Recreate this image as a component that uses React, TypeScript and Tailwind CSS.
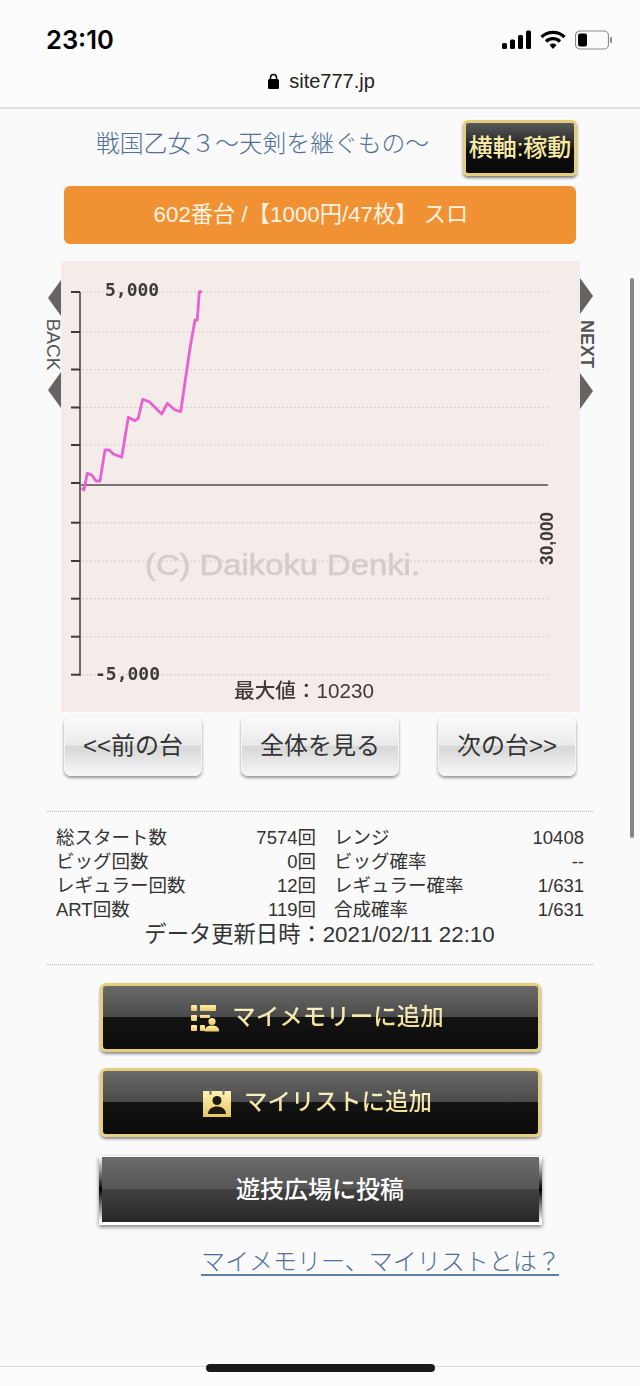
import React from "react";

const JP = '"Liberation Sans","Noto Sans CJK JP",sans-serif';

const line =
  "81.7,488 84,490 87.3,473.3 91.7,475 96,481 100,481 105,450 109.3,450 113.3,454 121.7,457.3 128.3,417.3 135,420.7 138.3,418.3 142.7,399.3 149.3,401.7 161.7,414 167.3,403.3 175,410 180.7,411.7 190,348.3 195,320 197.3,320 199.3,291.7 202,291.7";

const gridYs = [292, 332, 369.5, 407.5, 445, 522.7, 561, 598.7, 636.7, 674.7];
const tickYs = [292, 332, 369.5, 407.5, 445, 483, 522.7, 561, 598.7, 636.7, 674.7];

function Chart() {
  return (
    <svg viewBox="61 261 519 451" className="block w-[519px] h-[451px] blur-[0.5px]">
      {gridYs.map((y) => (
        <line key={y} x1={82} x2={548} y1={y} y2={y} stroke="#d6d0cc" strokeWidth={1.2} strokeDasharray="2 2" />
      ))}
      <line x1={80} x2={80} y1={292} y2={676} stroke="#6f6966" strokeWidth={2} />
      {tickYs.map((y) => (
        <line key={y} x1={71} x2={80} y1={y} y2={y} stroke="#3f3a38" strokeWidth={2} />
      ))}
      <line x1={80} x2={548} y1={485} y2={485} stroke="#7b7472" strokeWidth={2} />
      <polyline points={line} fill="none" stroke="#e860d2" strokeWidth={2.8} strokeLinejoin="round" />
      <text x={105} y={296} fontFamily='"DejaVu Sans Mono",monospace' fontSize={18} fontWeight={700} fill="#3d3a38">5,000</text>
      <text x={95} y={680} fontFamily='"DejaVu Sans Mono",monospace' fontSize={18} fontWeight={700} fill="#3d3a38">-5,000</text>
      <text x={145} y={575} fontFamily='"Liberation Sans",sans-serif' fontSize={30} fontWeight={400} fill="#d3cdca" stroke="#d3cdca" strokeWidth={0.6} textLength={275} lengthAdjust="spacingAndGlyphs">(C) Daikoku Denki.</text>
      <text x={234} y={698} fontFamily={JP} fontSize={20} fontWeight={500} fill="#3f3a38" textLength={140} lengthAdjust="spacingAndGlyphs">最大値：10230</text>
      <text transform="translate(553,565) rotate(-90)" fontFamily='"Liberation Sans",sans-serif' fontSize={19} fontWeight={700} fill="#3d3a38" textLength={53} lengthAdjust="spacingAndGlyphs">30,000</text>
    </svg>
  );
}

function Tri({ dir }: { dir: "l" | "r" }) {
  return (
    <svg width="14" height="36" viewBox="0 0 14 36" className="block">
      <polygon points={dir === "l" ? "14,0 1,18 14,36" : "0,0 13,18 0,36"} fill="#666463" />
    </svg>
  );
}

function SideNav({ label, dir }: { label: string; dir: "l" | "r" }) {
  return (
    <div className={`w-[14px] flex flex-col items-center ${dir === "l" ? "pt-[19px]" : "pt-[17px]"}`}>
      <Tri dir={dir} />
      <div className={`flex items-center justify-center ${dir === "l" ? "h-[56px]" : "h-[59px]"}`}>
        <span
          className={`rotate-90 leading-none text-[#555] whitespace-nowrap ${dir === "l" ? "text-[19px]" : "text-[18px] font-bold"}`}
          style={{ fontFamily: JP }}
        >
          {label}
        </span>
      </div>
      <Tri dir={dir} />
    </div>
  );
}

function GreyBtn({ label, w }: { label: string; w: string }) {
  return (
    <div
      className={`${w} h-[60px] rounded-[7px] flex items-center justify-center text-[24px] text-[#333] bg-[linear-gradient(#fbfbfb_0%,#e9e9e9_49%,#d6d6d6_50%,#f7f7f7_100%)] border border-[#f4f4f4] shadow-[0_2px_3px_rgba(0,0,0,0.4)]`}
    >
      {label}
    </div>
  );
}

function StatRow({ a, b, c, d }: { a: string; b: string; c: string; d: string }) {
  return (
    <div className="flex h-[24px] items-center text-[18.5px] text-[#333] leading-[24px]">
      <span className="w-[190px] whitespace-nowrap">{a}</span>
      <span className="w-[70px] text-right whitespace-nowrap">{b}</span>
      <span className="w-[18px]" />
      <span className="w-[180px] whitespace-nowrap">{c}</span>
      <span className="w-[70px] text-right whitespace-nowrap">{d}</span>
    </div>
  );
}

function MemoryIcon() {
  return (
    <svg width="28" height="28" viewBox="0 0 28 28">
      <defs>
        <linearGradient id="g1" x1="0" y1="0" x2="0" y2="1">
          <stop offset="0" stopColor="#fff0a8" />
          <stop offset="1" stopColor="#e8c968" />
        </linearGradient>
      </defs>
      <g fill="url(#g1)">
        <rect x="0" y="1" width="6" height="6" rx="1" />
        <rect x="0" y="11" width="6" height="6" rx="1" />
        <rect x="0" y="21" width="6" height="6" rx="1" />
        <rect x="9" y="1" width="16" height="6" rx="1" />
        <rect x="9" y="11" width="10" height="3" />
        <rect x="9" y="21" width="5" height="6" rx="1" />
        <circle cx="21" cy="17.5" r="3.6" />
        <path d="M13.5 27.5c.5-4.5 3.5-6 7.5-6s7 1.5 7.5 6z" />
      </g>
    </svg>
  );
}

function ListIcon() {
  return (
    <svg width="28" height="28" viewBox="0 0 28 28">
      <defs>
        <linearGradient id="g2" x1="0" y1="0" x2="0" y2="1">
          <stop offset="0" stopColor="#fff3b4" />
          <stop offset="1" stopColor="#e6c662" />
        </linearGradient>
      </defs>
      <rect x="0" y="2" width="28" height="26" fill="url(#g2)" />
      <rect x="6.5" y="0" width="2" height="6" rx="1" fill="#6a6a6a" />
      <rect x="19.5" y="0" width="2" height="6" rx="1" fill="#6a6a6a" />
      <circle cx="14" cy="11.5" r="4.5" fill="#1d1a12" />
      <path d="M5 25c.5-5.5 4.500-7.500 9-7.500s8.500 2 9 7.500z" fill="#1d1a12" />
    </svg>
  );
}

function GoldBtn({ icon, label, mt }: { icon: React.ReactNode; label: string; mt: string }) {
  return (
    <div
      className={`${mt} w-[441px] h-[69px] mx-auto pr-[5px] rounded-[6px] border-[3px] border-[#e6cf7c] flex items-center justify-center gap-[13px] bg-[linear-gradient(#6a6a6a_0%,#4b4b4b_49%,#141414_50%,#0b0b0b_100%)] shadow-[0_2px_3px_rgba(0,0,0,0.45)]`}
    >
      {icon}
      <span className="text-[23.5px] font-medium bg-[linear-gradient(#fff9cf,#ecd584)] bg-clip-text text-transparent">
        {label}
      </span>
    </div>
  );
}

export default function App() {
  return (
    <div className="relative w-[640px] h-[1386px] overflow-hidden bg-[#fafafa]" style={{ fontFamily: JP }}>
      {/* browser header */}
      <div className="h-[109px] bg-[#fcfcfc] border-b-2 border-[#e2e2e2]">
        <div className="flex items-center justify-between h-[78px] pl-[46px] pr-[27px] pt-[2px]">
          <span className="text-[25.5px] font-semibold text-black" style={{ fontFamily: "Inter,sans-serif" }}>23:10</span>
          <div className="flex items-center gap-[8px]">
            <svg width="30" height="20" viewBox="0 0 30 20">
              <rect x="0" y="13" width="5" height="6" rx="1.5" fill="#000" />
              <rect x="8" y="9.5" width="5" height="9.5" rx="1.5" fill="#000" />
              <rect x="16" y="5" width="5" height="14" rx="1.5" fill="#000" />
              <rect x="24" y="0.5" width="5" height="18.5" rx="1.5" fill="#000" />
            </svg>
            <svg width="26" height="20" viewBox="0 0 26 20">
              <path d="M1.5 7a16.5 16.5 0 0 1 23 0" fill="none" stroke="#000" strokeWidth="3.2" />
              <path d="M6 11.5a10 10 0 0 1 14 0" fill="none" stroke="#000" strokeWidth="3.2" />
              <path d="M9.5 15a5 5 0 0 1 7 0L13 19z" fill="#000" />
            </svg>
            <svg width="38" height="20" viewBox="0 0 38 20" className="ml-[1px]">
              <rect x="0.5" y="1" width="33" height="18" rx="4.5" fill="none" stroke="#8c8c8c" strokeWidth="1.2" />
              <rect x="3" y="3.5" width="9" height="13" rx="2" fill="#000" />
              <rect x="35" y="7" width="2" height="6" rx="1" fill="#8c8c8c" />
            </svg>
          </div>
        </div>
        <div className="flex items-center justify-center gap-[10px] h-[20px] mt-[-7px] pl-[3px]">
          <svg width="11" height="16" viewBox="0 0 11 16">
            <rect x="0" y="6" width="11" height="10" rx="1.5" fill="#000" />
            <path d="M2.5 7V4.5a3 3 0 0 1 6 0V7" fill="none" stroke="#000" strokeWidth="1.5" />
          </svg>
          <span className="text-[20px] text-[#222]">site777.jp</span>
        </div>
      </div>

      {/* title row */}
      <div className="flex items-start h-[77px] pt-[11px] pl-[96px]">
        <span className="w-[367px] pt-[9px] text-[23.8px] leading-[30px] text-[#4d6f98] whitespace-nowrap font-light">
          戦国乙女３～天剣を継ぐもの～
        </span>
        <div className="w-[114px] h-[56px] rounded-[5px] border-[3px] border-[#e6cf7c] flex items-center justify-center bg-[linear-gradient(#5a5a5a_0%,#2b2b2b_40%,#0d0d0d_55%,#0a0a0a_100%)] shadow-[0_2px_3px_rgba(0,0,0,0.5)]">
          <span className="text-[24px] font-medium whitespace-nowrap text-[#f8e9a4]">横軸:稼動</span>
        </div>
      </div>

      {/* machine bar */}
      <div className="mx-[64px] h-[58px] rounded-[6px] bg-[#f09233] flex items-center justify-center pr-[18px] text-[22.3px] text-[#fdf3e3]">
        602番台 /【1000円/47枚】 スロ
      </div>

      {/* chart row */}
      <div className="flex mt-[17px] pl-[47px]">
        <SideNav label="BACK" dir="l" />
        <div className="w-[519px] h-[451px] bg-[#f4ece8]">
          <Chart />
        </div>
        <SideNav label="NEXT" dir="r" />
      </div>

      {/* nav buttons */}
      <div className="flex justify-between mx-[64px] mt-[4px]">
        <GreyBtn label="<<前の台" w="w-[138px]" />
        <GreyBtn label="全体を見る" w="w-[158px]" />
        <GreyBtn label="次の台>>" w="w-[138px]" />
      </div>

      {/* stats */}
      <div className="mx-[47px] mt-[35px] border-t border-b border-dotted border-[#b5b5b5] h-[154px] pt-[14px] px-[9px]">
        <StatRow a="総スタート数" b="7574回" c="レンジ" d="10408" />
        <StatRow a="ビッグ回数" b="0回" c="ビッグ確率" d="--" />
        <StatRow a="レギュラー回数" b="12回" c="レギュラー確率" d="1/631" />
        <StatRow a="ART回数" b="119回" c="合成確率" d="1/631" />
        <div className="text-center text-[22.3px] leading-[28px] text-[#333] mt-[-1px] pr-[1px]">データ更新日時：2021/02/11 22:10</div>
      </div>

      {/* actions */}
      <GoldBtn mt="mt-[18px]" icon={<MemoryIcon />} label="マイメモリーに追加" />
      <GoldBtn mt="mt-[16px]" icon={<ListIcon />} label="マイリストに追加" />
      <div className="relative mt-[19px] w-[443px] h-[69px] mx-auto border-x-[3px] border-b-[3px] border-t border-white flex items-center justify-center text-[24px] font-medium text-white bg-[linear-gradient(#6a6a6a_0%,#565656_49%,#414141_50%,#272727_100%)] shadow-[0_2px_4px_rgba(0,0,0,0.5)]">
        <span className="absolute left-[-3px] top-0 bottom-0 w-[3px] bg-[linear-gradient(#ffffff_0%,#000000_50%,#ffffff_100%)]" />
        遊技広場に投稿
        <span className="absolute right-[-3px] top-0 bottom-0 w-[3px] bg-[linear-gradient(#ffffff_0%,#000000_50%,#ffffff_100%)]" />
      </div>

      <div className="mt-[24px] pl-[201px] h-[30px]">
        <span className="inline-block w-[358px] border-b-2 border-[#5f7fa6] text-[24px] leading-[25px] text-[#4d6f98] whitespace-nowrap font-light">
          マイメモリー、マイリストとは？
        </span>
      </div>

      {/* overlays: scrollbar + home indicator */}
      <div className="absolute left-[630px] top-[278px] w-[4px] h-[560px] rounded-full bg-[#858585]" />
      <div className="absolute left-0 right-0 top-[1366px] h-[20px] bg-[#fcfcfc] border-t border-[#dcdcdc]" />
      <div className="absolute left-[206px] top-[1364px] w-[229px] h-[8px] rounded-full bg-[#1a1a1a]" />
    </div>
  );
}
